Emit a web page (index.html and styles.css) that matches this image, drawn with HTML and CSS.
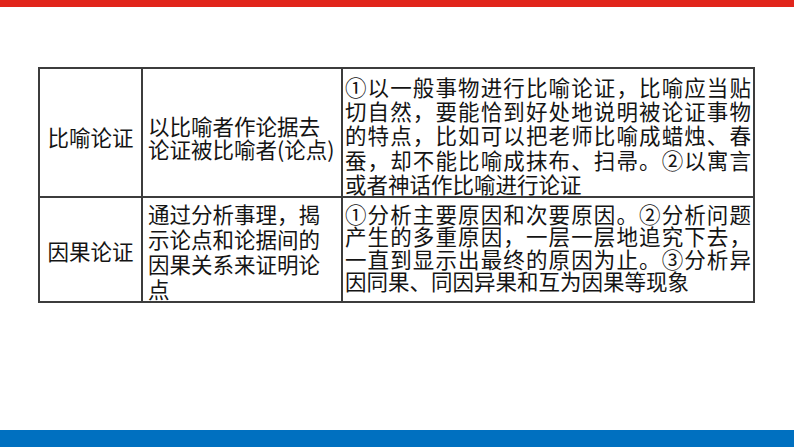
FILE: index.html
```html
<!DOCTYPE html>
<html lang="zh-CN">
<head>
<meta charset="utf-8">
<title>论证方法</title>
<link rel="stylesheet" href="styles.css">
</head>
<body>
<div class="page">
  <div class="top-bar"></div>
  <main class="content">
    <table class="methods">
      <colgroup>
        <col class="c-name">
        <col class="c-def">
        <col class="c-desc">
      </colgroup>
      <tr class="row-1">
        <td class="name">比喻论证</td>
        <td class="def">以比喻者作论据去论证被比喻者(论点)</td>
        <td class="desc">①以一般事物进行比喻论证，比喻应当贴切自然，要能恰到好处地说明被论证事物的特点，比如可以把老师比喻成蜡烛、春蚕，却不能比喻成抹布、扫帚。②以寓言或者神话作比喻进行论证</td>
      </tr>
      <tr class="row-2">
        <td class="name">因果论证</td>
        <td class="def">通过分析事理，揭示论点和论据间的因果关系来证明论点</td>
        <td class="desc">①分析主要原因和次要原因。②分析问题产生的多重原因，一层一层地追究下去，一直到显示出最终的原因为止。③分析异因同果、同因异果和互为因果等现象</td>
      </tr>
    </table>
  </main>
  <div class="bottom-bar"></div>
</div>
</body>
</html>
```

FILE: styles.css
```css
html, body {
  margin: 0;
  padding: 0;
  background: #ffffff;
}

.page {
  width: 794px;
  height: 447px;
  display: flex;
  flex-direction: column;
  overflow: hidden;
  font-family: "Noto Sans CJK SC", "Noto Sans", sans-serif;
  color: #141414;
}

.top-bar {
  height: 7px;
  background: #e1251b;
  flex: none;
}

.content {
  flex: 1;
  padding: 60px 0 0 38px;
}

.bottom-bar {
  height: 17px;
  background: #0070c0;
  flex: none;
}

.methods {
  border-collapse: collapse;
  table-layout: fixed;
  width: 715px;
}

.c-name { width: 103px; }
.c-def { width: 200px; }
.c-desc { width: 412px; }

.methods td {
  border: 2px solid #3c3c3c;
  vertical-align: middle;
  font-size: 21.5px;
  padding: 0;
}

.row-1 { height: 129px; }
.row-2 { height: 105px; }

.name {
  text-align: center;
  font-size: 20.5px;
  line-height: 24px;
  padding-top: 8px !important;
}

.row-2 .name {
  padding-top: 2px !important;
}

.def {
  text-align: left;
  line-height: 23px;
  padding: 8px 2px 0 5px !important;
}

.row-2 .def {
  line-height: 25px;
  padding: 2px 2px 0 5px !important;
  word-break: break-all;
}

.desc {
  text-align: justify;
  text-align-last: left;
  padding: 6px 2px 0 2px !important;
  line-height: 24.2px;
  word-break: break-all;
}

.row-2 .desc {
  line-height: 22.3px;
  padding: 0 2px 4px 2px !important;
}
```
